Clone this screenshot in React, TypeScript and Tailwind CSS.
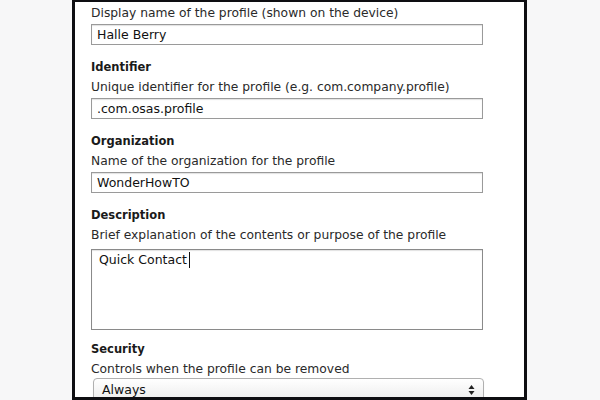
import React from "react";

const font = { fontFamily: '"DejaVu Sans", "Liberation Sans", sans-serif' };

function Field({ label, help, value, first }: { label?: string; help: string; value: string; first?: boolean }) {
  return (
    <div className={first ? "" : "mt-[14px]"}>
      {label && <div className="h-[20px] text-[11.5px] leading-[16px] font-bold text-[#1a1a1a]">{label}</div>}
      <div className="h-[19px] text-[12.3px] leading-[16px] text-[#2a2a2a]">{help}</div>
      <div className="w-[392px] h-[21px] border border-[#9a9a9a] shadow-[inset_0_1px_1px_rgba(0,0,0,0.12)] bg-white pl-[5px] text-[12.5px] leading-[19px] text-[#111]">
        {value}
      </div>
    </div>
  );
}

export default function App() {
  return (
    <div className="w-[600px] h-[400px] bg-[#f7f7f8] flex overflow-hidden" style={font}>
      <div className="w-[72px] shrink-0" />
      <div className="w-[455px] h-[400px] shrink-0 bg-white border-x-[3px] border-t-2 border-b-[3px] border-[#0e0e12] overflow-hidden pl-[16px] pt-[3px]">
        <Field first help="Display name of the profile (shown on the device)" value="Halle Berry" />
        <Field label="Identifier" help="Unique identifier for the profile (e.g. com.company.profile)" value=".com.osas.profile" />
        <Field label="Organization" help="Name of the organization for the profile" value="WonderHowTO" />
        <div className="mt-[14px]">
          <div className="h-[20px] text-[11.5px] leading-[16px] font-bold text-[#1a1a1a]">Description</div>
          <div className="h-[22px] text-[12.3px] leading-[16px] text-[#2a2a2a]">Brief explanation of the contents or purpose of the profile</div>
          <div className="w-[392px] h-[81px] border border-[#8a8a8a] shadow-[inset_0_1px_1px_rgba(0,0,0,0.12)] bg-white pl-[7px] pt-[1px] text-[12.5px] leading-[17px] text-[#111] flex items-start">
            <span>Quick Contact</span>
            <span className="inline-block w-px h-[16px] bg-[#111] ml-[2px] mt-[1px]" />
          </div>
        </div>
        <div className="mt-[11px]">
          <div className="h-[20px] text-[11.5px] leading-[16px] font-bold text-[#1a1a1a]">Security</div>
          <div className="h-[17px] text-[12.3px] leading-[16px] text-[#2a2a2a]">Controls when the profile can be removed</div>
          <div className="ml-[2px] w-[391px] h-[24px] rounded-[4px] border border-[#b0b0b0] bg-gradient-to-b from-white to-[#ececec] shadow-[0_1px_1px_rgba(0,0,0,0.1)] flex items-center justify-between pl-[8px] pr-[8px] text-[12.5px] text-[#111]">
            <span>Always</span>
            <svg width="7" height="12" viewBox="0 0 7 12">
              <path d="M3.5 1 L6.5 5 L0.5 5 Z" fill="#222" />
              <path d="M3.5 11 L6.5 7 L0.5 7 Z" fill="#222" />
            </svg>
          </div>
        </div>
      </div>
    </div>
  );
}
